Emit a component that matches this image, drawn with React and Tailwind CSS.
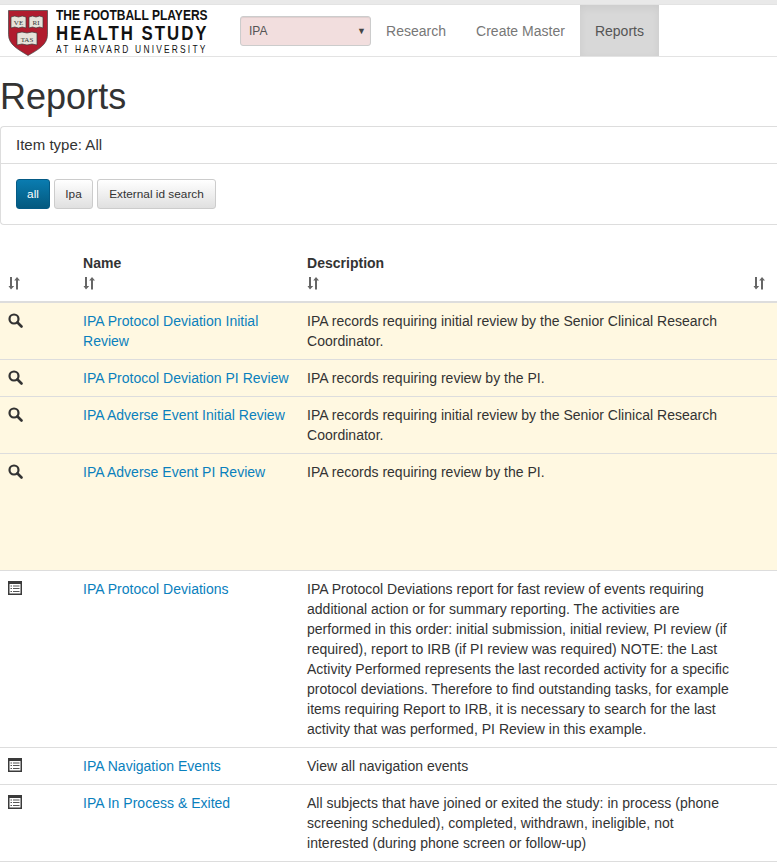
const SortIcon = () => (
  <svg width="14" height="14" viewBox="0 0 14 14" className="block" fill="#666">
    <path d="M2 1h2v9h2.200L3 13.500 0.500 10H2z" />
    <path d="M8 13.500h2V4.500h2L9 1 6.200 4.500H8z" />
  </svg>
);

const SearchIcon = () => (
  <svg width="15" height="15" viewBox="0 0 15 15" className="block" fill="none" stroke="#333">
    <circle cx="6" cy="6" r="4.500" strokeWidth="2.200" />
    <path d="M9.500 9.500 13.500 13.500" strokeWidth="2.600" strokeLinecap="round" />
  </svg>
);

const ListIcon = () => (
  <svg width="14" height="14" viewBox="0 0 14 14" className="block">
    <rect x="0.750" y="0.750" width="12.500" height="12.500" fill="#fff" stroke="#3a3a3a" strokeWidth="1.500" />
    <rect x="0" y="0" width="14" height="3" fill="#3a3a3a" />
    <path d="M2.500 5h1.500M2.500 7.500h1.500M2.500 10.500h1.500M5 5h6.500M5 7.500h6.500M5 10.500h6.500" stroke="#555" strokeWidth="1.200" />
  </svg>
);

const Book = ({ x, y, w, h, label }) => (
  <g>
    <path
      d={`M${x} ${y}l${w * 0.25} -1 l${w * 0.25} 1 l${w * 0.25} -1 l${w * 0.25} 1 v${h} l${-w * 0.25} -1 l${-w * 0.25} 1 l${-w * 0.25} -1 l${-w * 0.25} 1z`}
      fill="#e6e3da"
      stroke="#3a3a3a"
      strokeWidth="0.700"
    />
    <text
      x={x + w / 2}
      y={y + h / 2 + 2.500}
      textAnchor="middle"
      fontSize="7"
      fill="#333"
      fontFamily="Liberation Serif, serif"
    >
      {label}
    </text>
  </g>
);

const Shield = () => (
  <svg width="40" height="46" viewBox="0 0 40 46" className="block shrink-0">
    <path d="M0.500 0.500h39v24c0 10-9 15-19.500 21C10 39.500 0.500 34.500 0.500 24.500z" fill="#b01c2e" stroke="#444" strokeWidth="0.700" />
    <Book x={3} y={7} w={15} h={11} label="VE" />
    <Book x={21} y={7} w={14} h={11} label="RI" />
    <Book x={9} y={23} w={20} h={12} label="TAS" />
  </svg>
);

const rows = [
  { icon: "search", name: "IPA Protocol Deviation Initial Review", desc: "IPA records requiring initial review by the Senior Clinical Research Coordinator." },
  { icon: "search", name: "IPA Protocol Deviation PI Review", desc: "IPA records requiring review by the PI." },
  { icon: "search", name: "IPA Adverse Event Initial Review", desc: "IPA records requiring initial review by the Senior Clinical Research Coordinator." },
  { icon: "search", name: "IPA Adverse Event PI Review", desc: "IPA records requiring review by the PI.", tall: true },
  { icon: "list", name: "IPA Protocol Deviations", desc: "IPA Protocol Deviations report for fast review of events requiring additional action or for summary reporting. The activities are performed in this order: initial submission, initial review, PI review (if required), report to IRB (if PI review was required) NOTE: the Last Activity Performed represents the last recorded activity for a specific protocol deviations. Therefore to find outstanding tasks, for example items requiring Report to IRB, it is necessary to search for the last activity that was performed, PI Review in this example." },
  { icon: "list", name: "IPA Navigation Events", desc: "View all navigation events" },
  { icon: "list", name: "IPA In Process & Exited", desc: "All subjects that have joined or exited the study: in process (phone screening scheduled), completed, withdrawn, ineligible, not interested (during phone screen or follow-up)" },
];

export default function App() {
  return (
    <div className="w-[777px] overflow-hidden bg-white text-[14px] leading-5 tracking-[0.015px] text-[#333] font-['Liberation_Sans',Arial,sans-serif]">
      <div className="h-1 bg-[#e9e9e9]" />
      <nav className="flex h-[53px] items-stretch border-y border-[#e3e3e3] bg-white">
        <div className="flex w-[240px] shrink-0 items-end gap-[8px] pl-2">
          <Shield />
          <div className="mb-[2px] w-[153px] text-[#111]">
            <div className="w-[190px] origin-left scale-x-[0.8] text-[15px] leading-[15px] font-bold whitespace-nowrap">THE FOOTBALL PLAYERS</div>
            <div className="w-[190px] origin-left scale-x-[0.8] text-[21px] leading-[21px] font-bold tracking-[2.500px] whitespace-nowrap">HEALTH STUDY</div>
            <div className="mt-[1px] w-[190px] origin-left scale-x-[0.8] text-[10.500px] leading-[10px] tracking-[2.750px] whitespace-nowrap">AT HARVARD UNIVERSITY</div>
          </div>
        </div>
        <div className="flex items-center">
          <div className="relative flex h-[30px] w-[131px] items-center rounded-[3px] border border-[#ccc] bg-[#f2dede] pl-2 text-[12px] text-[#555] shadow-[inset_0_1px_1px_rgba(0,0,0,0.075)]">
            IPA
            <span className="absolute right-1 top-[8px] text-[9px] leading-3 text-[#444]">▼</span>
          </div>
        </div>
        <div className="flex items-center px-[15px] text-[#777]">Research</div>
        <div className="flex items-center px-[15px] text-[#777]">Create Master</div>
        <div className="flex w-[79px] items-center justify-center bg-[#d8d8d8] text-[#555] shadow-[inset_0_3px_9px_rgba(0,0,0,0.06)]">Reports</div>
      </nav>

      <h1 className="mt-5 mb-[9px] text-[36px] leading-[40px] font-normal text-[#333]">Reports</h1>

      <section className="mb-5 rounded-l border border-r-0 border-[#ddd] bg-white">
        <div className="flex h-[37px] items-center border-b border-[#ddd] px-[15px] text-[15px]">Item type: All</div>
        <div className="flex gap-1 px-[15px] py-[15px] text-[11.800px]">
          <button className="h-[30px] w-[34px] rounded-[3px] border border-[#045a85] bg-gradient-to-b from-[#0a7cb0] to-[#04597f] text-white">all</button>
          <button className="h-[30px] w-[39px] rounded-[3px] border border-[#ccc] bg-gradient-to-b from-white to-[#e0e0e0] text-[#333]">Ipa</button>
          <button className="h-[30px] w-[119px] rounded-[3px] border border-[#ccc] bg-gradient-to-b from-white to-[#e0e0e0] text-[#333]">External id search</button>
        </div>
      </section>

      <table className="w-[777px] table-fixed border-collapse">
        <colgroup>
          <col className="w-[75px]" />
          <col className="w-[224px]" />
          <col className="w-[446px]" />
          <col className="w-[32px]" />
        </colgroup>
        <thead>
          <tr className="border-b-2 border-[#ddd]">
            <th className="px-2 pt-2 pb-2 align-bottom"><div className="h-5 pt-[3px]"><SortIcon /></div></th>
            <th className="px-2 pt-2 pb-2 text-left align-bottom font-bold">Name<div className="h-5 pt-[3px]"><SortIcon /></div></th>
            <th className="px-2 pt-2 pb-2 text-left align-bottom font-bold">Description<div className="h-5 pt-[3px]"><SortIcon /></div></th>
            <th className="px-2 pt-2 pb-2 align-bottom"><div className="h-5 pt-[3px]"><SortIcon /></div></th>
          </tr>
        </thead>
        <tbody>
          {rows.map((r) => (
            <tr key={r.name} className={`border-b border-[#ddd] ${r.icon === "search" ? "bg-[#fff8e1]" : "bg-white"} ${r.tall ? "h-[117px]" : ""}`}>
              <td className="px-2 py-2 align-top"><div className="pt-[2px]">{r.icon === "search" ? <SearchIcon /> : <ListIcon />}</div></td>
              <td className="px-2 py-2 align-top text-[#0a80bd]">{r.name}</td>
              <td className="px-2 py-2 align-top">{r.desc}</td>
              <td className="px-2 py-2" />
            </tr>
          ))}
        </tbody>
      </table>
      <div className="h-[2px]" />
    </div>
  );
}
